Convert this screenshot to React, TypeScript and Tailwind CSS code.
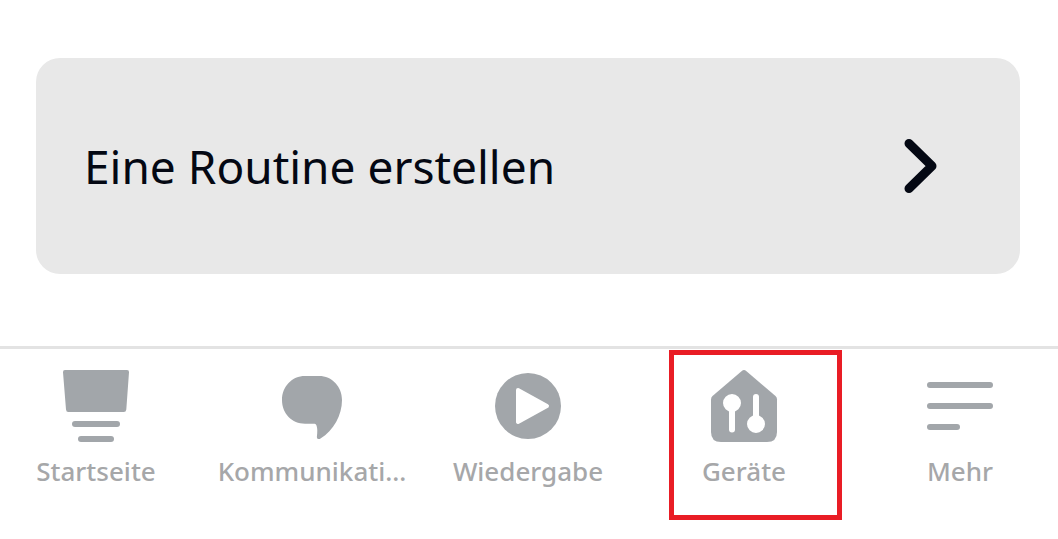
import type { ReactNode } from "react";

type Tab = {
  label: string;
  icon: ReactNode;
  highlighted?: boolean;
};

const HomeIcon = () => (
  <svg viewBox="0 0 72 72" className="size-18" fill="currentColor" aria-hidden="true">
    <path d="M5 0H67Q69.200 0 69 2.200L66.300 39.500Q66 42 63.800 42H8.200Q6.300 42 6 39.500L3 2.200Q2.800 0 5 0Z" />
    <rect x="12" y="51" width="48" height="6" rx="3" />
    <rect x="18" y="66" width="36" height="6" rx="3" />
  </svg>
);

const ChatIcon = () => (
  <svg viewBox="0 0 72 72" className="size-18" fill="currentColor" aria-hidden="true">
    <path d="M29 6H43C56 6 66 16.500 66 30C66 45 57.500 60.500 44.500 68.600C42.500 69.800 40.600 68.800 40.900 66.500C41.500 62 41.500 58 40.500 55.500C40 54 39.200 53.700 37.500 53.700H29C16 53.700 6 43.500 6 30C6 16.500 16 6 29 6Z" />
  </svg>
);

const PlayIcon = () => (
  <svg viewBox="0 0 72 72" className="size-18" aria-hidden="true">
    <circle cx="36" cy="36" r="33" fill="currentColor" />
    <path
      d="M26 20L55 36L26 52Z"
      fill="white"
      stroke="white"
      strokeWidth="4"
      strokeLinejoin="round"
    />
  </svg>
);

const DevicesIcon = () => (
  <svg viewBox="0 0 72 72" className="size-18" aria-hidden="true">
    <path
      fill="currentColor"
      d="M33.800 0.900Q36 -0.900 38.200 0.900L67.500 26Q69 27.300 69 29.500V62Q69 72 59 72H13Q3 72 3 62V29.500Q3 27.300 4.500 26Z"
    />
    <g fill="white" stroke="white" strokeWidth="6" strokeLinecap="round">
      <circle cx="24" cy="33" r="6" />
      <path d="M24 33V59.500" />
      <circle cx="48" cy="54" r="6" />
      <path d="M48 54V27" />
    </g>
  </svg>
);

const MoreIcon = () => (
  <svg
    viewBox="0 0 72 72"
    className="size-18"
    stroke="currentColor"
    strokeWidth="6"
    strokeLinecap="round"
    aria-hidden="true"
  >
    <path d="M6 15H66M6 36H66M6 57H33" />
  </svg>
);

const tabs: Tab[] = [
  { label: "Startseite", icon: <HomeIcon /> },
  { label: "Kommunikati…", icon: <ChatIcon /> },
  { label: "Wiedergabe", icon: <PlayIcon /> },
  { label: "Geräte", icon: <DevicesIcon />, highlighted: true },
  { label: "Mehr", icon: <MoreIcon /> },
];

export default function App() {
  return (
    <div className="min-h-screen overflow-hidden bg-white font-['Noto_Sans',sans-serif]">
      <main className="pt-[58px] pr-[38px] pb-18 pl-9">
        <button
          type="button"
          className="flex w-full items-center justify-between rounded-3xl bg-[#e8e8e8] py-18 pr-16 pl-12 text-left text-[#040813]"
        >
          <span className="text-[46px] leading-[72px]">Eine Routine erstellen</span>
          <svg
            viewBox="0 0 72 72"
            className="size-18 shrink-0"
            fill="none"
            stroke="currentColor"
            strokeWidth="9"
            strokeLinecap="round"
            strokeLinejoin="round"
            aria-hidden="true"
          >
            <path d="M25 13.500L48 36L25 58.500" />
          </svg>
        </button>
      </main>
      <nav className="border-t-3 border-[#e3e3e3]">
        <ul className="-mr-2.5 -ml-3 grid grid-cols-5">
          {tabs.map((tab) => (
            <li key={tab.label} className="relative">
              <button
                type="button"
                className="flex w-full flex-col items-center gap-[11px] pt-[21px] text-[#a2a6aa]"
              >
                {tab.icon}
                <span className="text-[26px] leading-9 font-medium whitespace-nowrap text-[#a6a7a9]">
                  {tab.label}
                </span>
              </button>
              {tab.highlighted && (
                <div className="pointer-events-none absolute top-px right-2.5 left-[33px] h-[170px] border-5 border-[#e91d25]" />
              )}
            </li>
          ))}
        </ul>
      </nav>
    </div>
  );
}
